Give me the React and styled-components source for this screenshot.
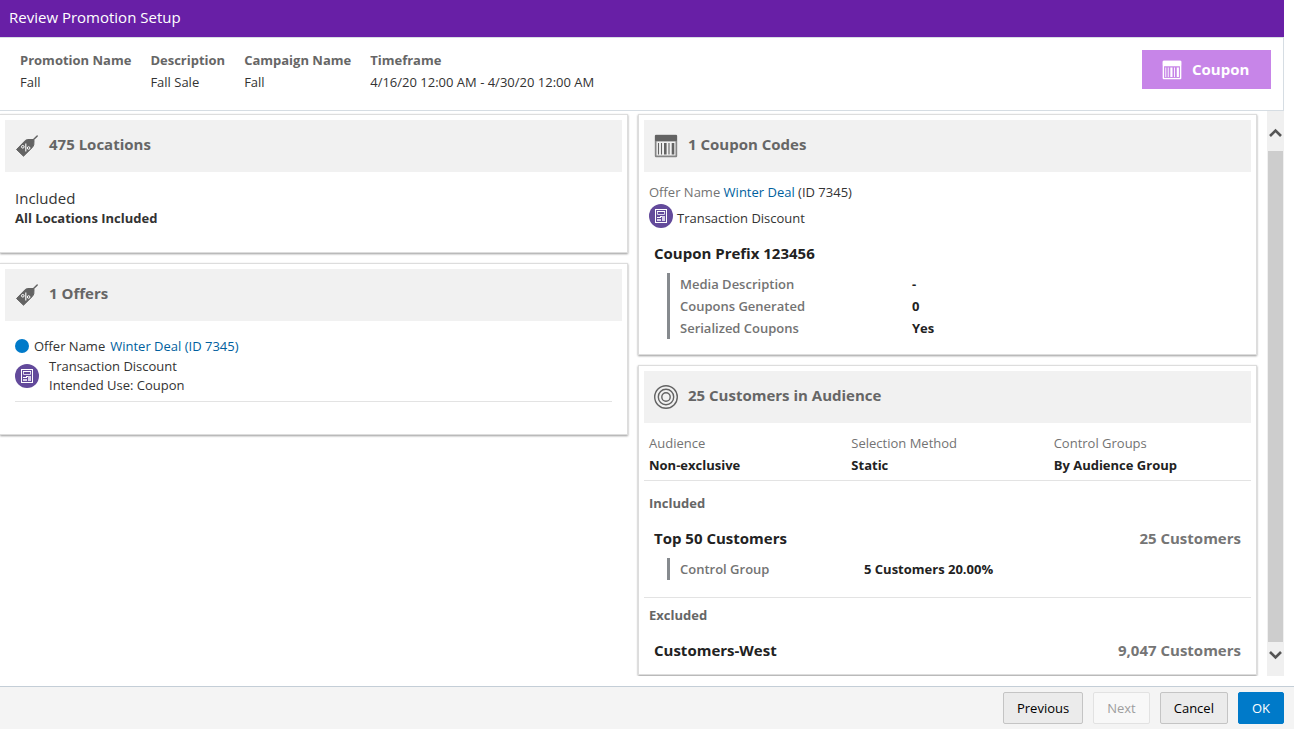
import React from "react";
import styled, { createGlobalStyle, css } from "styled-components";

const summary = [
  { label: "Promotion Name", value: "Fall" },
  { label: "Description", value: "Fall Sale" },
  { label: "Campaign Name", value: "Fall" },
  { label: "Timeframe", value: "4/16/20 12:00 AM - 4/30/20 12:00 AM" },
];

const couponDetails = [
  { label: "Media Description", value: "-" },
  { label: "Coupons Generated", value: "0" },
  { label: "Serialized Coupons", value: "Yes" },
];

const audience = [
  { label: "Audience", value: "Non-exclusive" },
  { label: "Selection Method", value: "Static" },
  { label: "Control Groups", value: "By Audience Group" },
];

const TagIcon = () => (
  <svg width="24" height="24" viewBox="0 0 24 24" aria-hidden="true">
    <path d="M1.5 15.5 L10.5 6.3 L12.5 5.5 L18 5.5 L19 6.5 L18.8 11 L17.5 13.3 L8.5 22.2 Z" fill="#636363" stroke="#636363" strokeLinejoin="round" />
    <path d="M17 7 L22.2 2" stroke="#636363" strokeWidth="1.5" strokeLinecap="round" />
    <circle cx="7.8" cy="12.8" r="1.3" fill="none" stroke="#fff" strokeWidth="1" />
    <circle cx="13.6" cy="14" r="1.3" fill="none" stroke="#fff" strokeWidth="1" />
    <path d="M10.8 9.5 V17.5" stroke="#fff" strokeWidth="1.1" />
  </svg>
);

const BarcodeIcon = ({ size = 24, color = "#636363", inner = "#f1f1f1", edge = "#858585" }) => (
  <svg width={size} height={size} viewBox="0 0 24 24" aria-hidden="true">
    <rect x="0.8" y="0.8" width="22.4" height="22.4" rx="1.2" fill={edge} />
    <rect x="1" y="1" width="22" height="6" rx="1" fill={color} />
    <rect x="2.5" y="7.5" width="19" height="14" fill={inner} />
    <path d="M4.5 9V20.5 M7.5 9V20.5 M15 9V20.5" stroke={color} strokeWidth="1.1" />
    <path d="M11.3 9V20.5 M19 9V20.5" stroke={color} strokeWidth="2.6" />
  </svg>
);

const DiscountIcon = () => (
  <svg width="24" height="24" viewBox="0 0 24 24" aria-hidden="true">
    <circle cx="12" cy="12" r="12" fill="#634a9b" />
    <rect x="6.5" y="5.5" width="11" height="13" fill="none" stroke="#fff" />
    <path d="M8 7.5H16" stroke="#fff" />
    <path d="M8.5 8V10.5H15.5V8" fill="none" stroke="#d9d1ea" />
    <path d="M11 12.5H13" stroke="#fff" />
    <rect x="8" y="13" width="4" height="1" fill="#fff" />
    <rect x="8" y="15" width="4" height="2" fill="#d9d1ea" />
    <rect x="13" y="12" width="3" height="5" fill="#d9d1ea" />
  </svg>
);

const TargetIcon = () => (
  <svg width="24" height="24" viewBox="0 0 24 24" fill="none" stroke="#636363" strokeWidth="1.4" aria-hidden="true">
    <circle cx="12" cy="12" r="11.3" />
    <circle cx="12" cy="12" r="7.7" />
    <circle cx="12" cy="12" r="4.2" />
  </svg>
);

const Chevron = ({ down }) => (
  <svg width="13" height="10" viewBox="0 0 13 10" aria-hidden="true">
    <path d={down ? "M1 2 L6.5 7.5 L12 2" : "M1 8 L6.5 2.5 L12 8"} fill="none" stroke="#555" strokeWidth="2.6" />
  </svg>
);

export default function App() {
  return (
    <Page>
      <GlobalStyle />
      <TitleBar>
        <Title>Review Promotion Setup</Title>
      </TitleBar>
      <Summary>
        <SummaryList>
          {summary.map((item) => (
            <div key={item.label}>
              <SummaryLabel>{item.label}</SummaryLabel>
              <Value>{item.value}</Value>
            </div>
          ))}
        </SummaryList>
        <CouponBadge>
          <BarcodeIcon size={20} color="#fff" inner="#c785e8" edge="#fff" />
          <span>Coupon</span>
        </CouponBadge>
      </Summary>

      <Content>
        <Columns>
          <Column>
            <Card $flush>
              <CardHeader>
                <TagIcon />
                <CardTitle>475 Locations</CardTitle>
              </CardHeader>
              <Locations>
                <Lead>Included</Lead>
                <Strong>All Locations Included</Strong>
              </Locations>
            </Card>
            <Card $flush>
              <CardHeader>
                <TagIcon />
                <CardTitle>1 Offers</CardTitle>
              </CardHeader>
              <Offers>
                <OfferName>
                  <Dot />
                  Offer Name <Link href="#offer">Winter Deal (ID 7345)</Link>
                </OfferName>
                <OfferType>
                  <DiscountIcon />
                  <div>
                    Transaction Discount
                    <br />
                    Intended Use: Coupon
                  </div>
                </OfferType>
              </Offers>
            </Card>
          </Column>

          <Column>
            <Card>
              <CardHeader>
                <BarcodeIcon />
                <CardTitle>1 Coupon Codes</CardTitle>
              </CardHeader>
              <Section>
                <div>
                  <Muted>Offer Name</Muted> <Link href="#offer">Winter Deal</Link> (ID 7345)
                </div>
                <CouponType>
                  <DiscountIcon />
                  <span>Transaction Discount</span>
                </CouponType>
                <GroupHeading>Coupon Prefix 123456</GroupHeading>
                <Details>
                  {couponDetails.map((item) => (
                    <DetailRow key={item.label} $labelWidth={232}>
                      <DetailLabel>{item.label}</DetailLabel>
                      <DetailValue>{item.value}</DetailValue>
                    </DetailRow>
                  ))}
                </Details>
              </Section>
            </Card>
            <Card>
              <CardHeader>
                <TargetIcon />
                <CardTitle>25 Customers in Audience</CardTitle>
              </CardHeader>
              <AudienceFacts>
                {audience.map((item) => (
                  <Fact key={item.label}>
                    <Muted>{item.label}</Muted>
                    <DetailValue>{item.value}</DetailValue>
                  </Fact>
                ))}
              </AudienceFacts>
              <AudienceGroup>
                <GroupLabel>Included</GroupLabel>
                <GroupHeading>
                  Top 50 Customers <Count>25 Customers</Count>
                </GroupHeading>
                <Details>
                  <DetailRow $labelWidth={184}>
                    <DetailLabel>Control Group</DetailLabel>
                    <DetailValue>5 Customers 20.00%</DetailValue>
                  </DetailRow>
                </Details>
              </AudienceGroup>
              <AudienceGroup $divided>
                <GroupLabel>Excluded</GroupLabel>
                <GroupHeading>
                  Customers-West <Count>9,047 Customers</Count>
                </GroupHeading>
              </AudienceGroup>
            </Card>
          </Column>
        </Columns>
        <Scrollbar>
          <ScrollButton aria-label="Scroll up">
            <Chevron />
          </ScrollButton>
          <Thumb />
          <ScrollButton aria-label="Scroll down" $bottom>
            <Chevron down />
          </ScrollButton>
        </Scrollbar>
      </Content>

      <Footer>
        <Button>Previous</Button>
        <Button disabled>Next</Button>
        <Button>Cancel</Button>
        <Button $primary>OK</Button>
      </Footer>
    </Page>
  );
}

const GlobalStyle = createGlobalStyle`
  * {
    box-sizing: border-box;
  }
  body {
    margin: 0;
    background: #fff;
    color: #333;
    font-family: "Segoe UI", "Open Sans", "Noto Sans", sans-serif;
    font-size: 13px;
    line-height: 22px;
  }
  h1, h2, h3 {
    margin: 0;
  }
  svg {
    display: block;
    flex: none;
  }
`;

const Page = styled.div`
  display: flex;
  flex-direction: column;
  height: 100vh;
  padding-bottom: 1px;
`;

const TitleBar = styled.header`
  margin-right: 10px;
  padding: 6px 9px 9px;
  background: #681fa6;
  color: #fff;
`;

const Title = styled.h1`
  font-size: 15px;
  font-weight: 400;
`;

const Summary = styled.section`
  display: flex;
  justify-content: space-between;
  align-items: flex-start;
  margin-right: 10px;
  padding: 11px 12px 17px 20px;
  border: 1px solid #d6dde3;
  border-left: 0;
`;

const SummaryList = styled.div`
  display: flex;
  gap: 19px;
`;

const SummaryLabel = styled.div`
  color: #666;
  font-weight: 700;
`;

const Value = styled.div`
  color: #333;
`;

const CouponBadge = styled.div`
  display: flex;
  align-items: center;
  gap: 10px;
  min-width: 129px;
  height: 39px;
  margin-top: 1px;
  padding: 0 20px;
  background: #c785e8;
  color: #fff;
  font-size: 15px;
  font-weight: 700;

  span {
    padding-bottom: 2px;
  }
`;

const Content = styled.main`
  display: flex;
  flex: 1;
  min-height: 0;
  margin: 0 10px 10px 0;
  overflow: hidden;
`;

const Columns = styled.div`
  display: grid;
  grid-template-columns: 628fr 619fr;
  column-gap: 10px;
  align-items: start;
  flex: 1;
  padding: 3px 10px 0 0;
`;

const Column = styled.div`
  display: flex;
  flex-direction: column;
  gap: 10px;
`;

const Card = styled.section`
  padding: 5px;
  border: 1px solid #ddd;
  box-shadow: 0 1px 2px rgba(0, 0, 0, 0.4);
  ${({ $flush }) => $flush && "border-left: 0;"}
`;

const CardHeader = styled.div`
  display: flex;
  align-items: center;
  gap: 10px;
  height: 52px;
  padding: 0 10px;
  background: #f1f1f1;
`;

const CardTitle = styled.h2`
  padding-bottom: 5px;
  color: #666;
  font-size: 15px;
  font-weight: 700;
`;

const Locations = styled.div`
  padding: 16px 10px 19px;
  line-height: 20px;
`;

const Lead = styled.div`
  font-size: 15px;
`;

const Strong = styled.div`
  font-weight: 700;
`;

const Offers = styled.div`
  margin: 0 10px 27px;
  padding: 14px 0 6px;
  border-bottom: 1px solid #e3e3e3;
`;

const OfferName = styled.div`
  display: flex;
  align-items: center;
  gap: 5px;
`;

const Dot = styled.span`
  width: 14px;
  height: 14px;
  border-radius: 50%;
  background: #007ac9;
`;

const OfferType = styled.div`
  display: flex;
  align-items: center;
  gap: 10px;
  line-height: 19px;
`;

const Link = styled.a`
  color: #005f9e;
  text-decoration: none;
`;

const Section = styled.div`
  padding: 9px 5px 10px;
`;

const Muted = styled.span`
  color: #737373;
`;

const CouponType = styled.div`
  display: flex;
  align-items: center;
  gap: 4px;
  margin-bottom: 14px;
  line-height: 20px;

  span {
    padding-top: 5px;
  }
`;

const GroupHeading = styled.h3`
  display: flex;
  justify-content: space-between;
  padding: 0 5px;
  color: #222;
  font-size: 15px;
  font-weight: 700;
`;

const Count = styled.span`
  color: #757575;
`;

const Details = styled.div`
  margin: 9px 0 0 18px;
  padding-left: 10px;
  border-left: 3px solid #868a8e;
`;

const DetailRow = styled.div`
  display: grid;
  grid-template-columns: ${({ $labelWidth }) => $labelWidth}px 1fr;
`;

const DetailLabel = styled.div`
  color: #737373;
  font-weight: 600;
`;

const DetailValue = styled.div`
  color: #222;
  font-weight: 700;
`;

const AudienceFacts = styled.div`
  display: grid;
  grid-template-columns: repeat(3, 1fr);
  padding: 9px 0 4px;
  border-bottom: 1px solid #e3e3e3;
`;

const Fact = styled.div`
  padding-left: 5px;
`;

const AudienceGroup = styled.div`
  padding: 11px 5px 17px;
  ${({ $divided }) =>
    $divided &&
    css`
      padding: 6px 5px 8px;
      border-top: 1px solid #e3e3e3;
    `}
`;

const GroupLabel = styled.div`
  margin-bottom: 13px;
  color: #666;
  font-weight: 700;
`;

const Scrollbar = styled.div`
  display: flex;
  flex-direction: column;
  width: 17px;
  padding: 0 1px;
  background: #f0f0f0;
`;

const ScrollButton = styled.button`
  display: flex;
  align-items: ${({ $bottom }) => ($bottom ? "flex-start" : "flex-end")};
  justify-content: center;
  height: ${({ $bottom }) => ($bottom ? 34 : 40)}px;
  padding: ${({ $bottom }) => ($bottom ? "8px 0 0" : "0 0 13px")};
  border: 0;
  background: transparent;
`;

const Thumb = styled.div`
  flex: 1;
  background: #cdcdcd;
`;

const Footer = styled.footer`
  display: flex;
  justify-content: flex-end;
  gap: 10px;
  padding: 5px 10px;
  border-top: 1px solid #c4ced7;
  background: #f4f4f4;
`;

const Button = styled.button`
  height: 32px;
  padding: 0 13px;
  border: 1px solid ${({ $primary }) => ($primary ? "#007ac9" : "#c4c4c4")};
  border-radius: 2px;
  background: ${({ $primary }) => ($primary ? "#007ac9" : "#ebebeb")};
  color: ${({ $primary }) => ($primary ? "#fff" : "#000")};
  font: inherit;

  &:disabled {
    border-color: #e2e2e2;
    background: #f8f8f8;
    color: #9e9e9e;
  }
`;
